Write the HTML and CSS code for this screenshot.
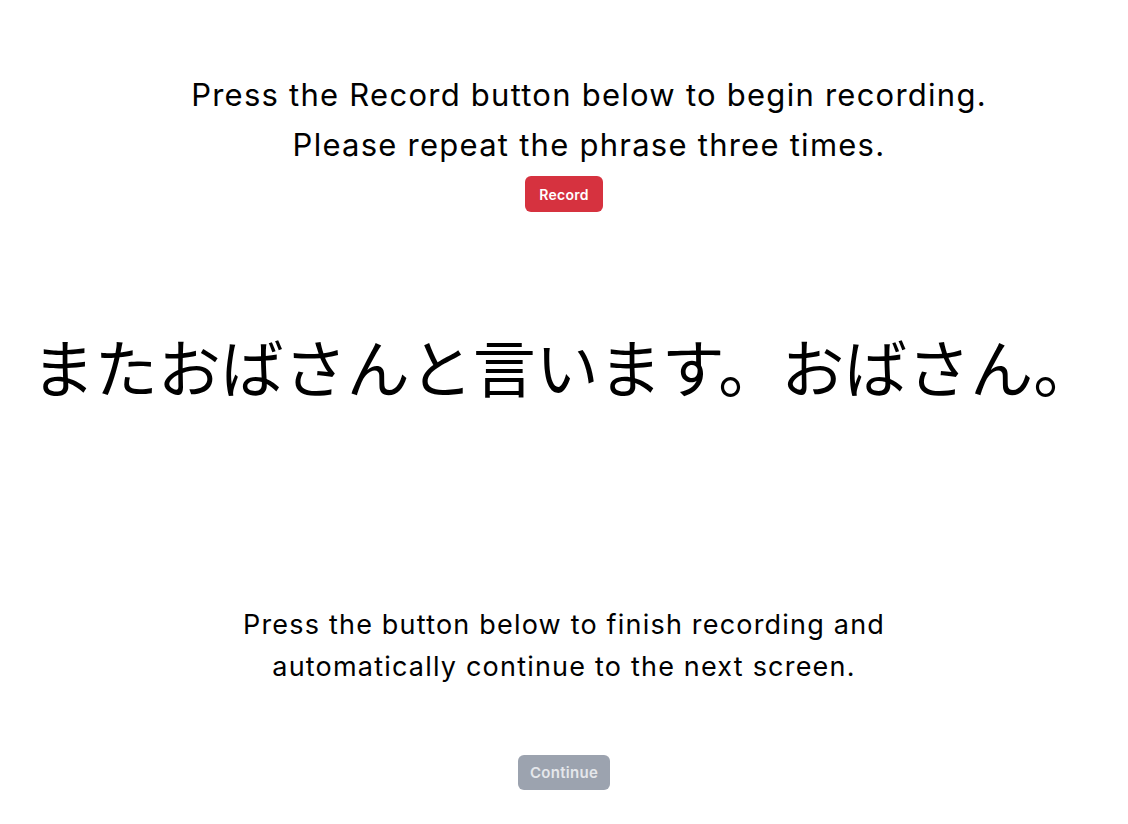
FILE: index.html
```html
<!DOCTYPE html>
<html lang="en">
<head>
<meta charset="utf-8">
<link rel="stylesheet" href="styles.css">
</head>
<body>
<main class="page">
  <section class="intro">
    <div class="instr-block">
      <p class="instr">Press the Record button below to begin recording.</p>
      <p class="instr">Please repeat the phrase three times.</p>
    </div>
    <button class="btn btn-record" type="button">Record</button>
  </section>
  <section class="phrase" lang="ja">またおばさんと言います。おばさん。</section>
  <section class="finish">
    <p class="finish-text">Press the button below to finish recording and<br>automatically continue to the next screen.</p>
    <button class="btn btn-continue" type="button" disabled>Continue</button>
  </section>
</main>
</body>
</html>
```
FILE: styles.css
```css
html, body {
  margin: 0;
  padding: 0;
  background: #ffffff;
}
body {
  font-family: Inter, "Noto Sans", sans-serif;
  color: #000;
}
.page {
  width: 1128px;
  display: flex;
  flex-direction: column;
  align-items: center;
}
.intro {
  display: flex;
  flex-direction: column;
  align-items: center;
  padding-top: 70px;
}
.instr-block {
  display: flex;
  flex-direction: column;
  align-items: center;
  padding-left: 50px;
}
.instr {
  margin: 0;
  font-size: 31px;
  line-height: 50px;
  letter-spacing: 1.25px;
}
.btn {
  font-family: Inter, sans-serif;
  font-weight: 600;
  border: none;
  border-radius: 6px;
  cursor: pointer;
  letter-spacing: 0.3px;
}
.btn-record {
  margin-top: 6px;
  height: 36px;
  padding: 0 14px;
  font-size: 14px;
  background: #d6323f;
  color: #fff;
}
.phrase {
  margin-top: 113px;
  font-family: "Noto Sans CJK JP", sans-serif;
  font-size: 63px;
  line-height: 80px;
  white-space: nowrap;
}
.finish {
  display: flex;
  flex-direction: column;
  align-items: center;
  margin-top: 199px;
}
.finish-text {
  margin: 0;
  text-align: center;
  font-size: 27px;
  line-height: 42px;
  letter-spacing: 1.2px;
}
.btn-continue {
  margin-top: 67px;
  height: 35px;
  padding: 0 12px;
  font-size: 15px;
  background: #9ca3af;
  color: #e5e7eb;
}
```
